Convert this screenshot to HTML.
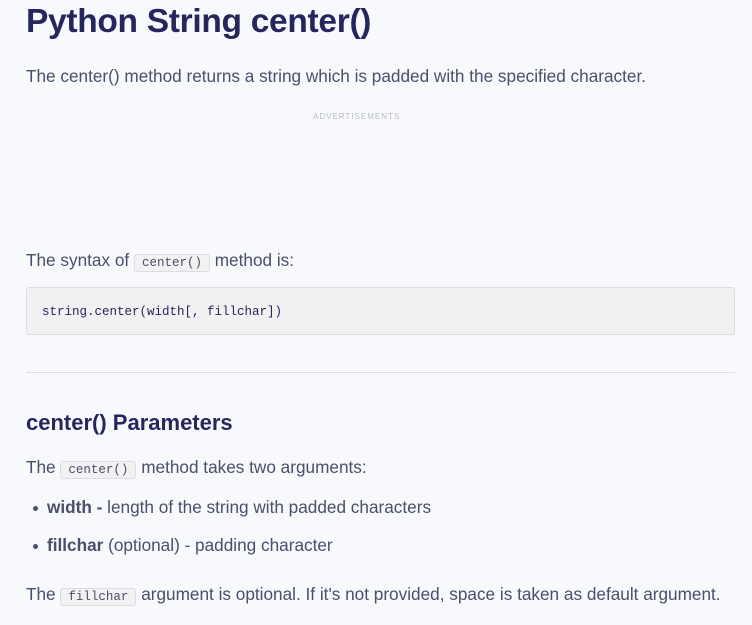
<!DOCTYPE html>
<html><head><style>
body{margin:0;width:752px;height:625px;background:#f8f9fc;font-family:"Liberation Sans",sans-serif;color:#4c4e6a;overflow:hidden;position:relative}
.a{position:absolute;left:26px;white-space:nowrap}
h1{position:absolute;left:26px;top:0;margin:0;font-size:33.5px;line-height:44px;color:#25265e;font-weight:bold;letter-spacing:-0.3px}
h2{position:absolute;left:26px;top:410px;margin:0;font-size:22px;color:#25265e;font-weight:bold}
p{margin:0;font-size:17.2px}
code{font-family:"Liberation Mono",monospace;font-size:12.5px;background:#f2f2f3;border:1px solid #dcdde3;border-radius:3px;padding:1px 7px;color:#4c4e6a}
.pre{position:absolute;left:26px;top:287px;width:709px;height:48px;background:#f1f1f2;border:1px solid #dcdde3;border-radius:3px;font-family:"Liberation Mono",monospace;font-size:12.5px;color:#25265e;line-height:48px;padding-left:15px;box-sizing:border-box}
b{color:#4c4e6a}
.dot{position:absolute;left:33px;width:5px;height:5px;border-radius:50%;background:#4c4e6a}
</style></head><body>
<h1>Python String center()</h1>
<p class="a" style="top:66px">The center() method returns a string which is padded with the specified character.</p>
<div class="a" style="left:313px;top:112px;font-size:8px;letter-spacing:1px;color:#b8bac6">ADVERTISEMENTS</div>
<p class="a" style="top:250px">The syntax of <code>center()</code> method is:</p>
<div class="pre">string.center(width[, fillchar])</div>
<div style="position:absolute;left:26px;top:372px;width:709px;height:1px;background:#dcdde3"></div>
<h2>center() Parameters</h2>
<p class="a" style="top:457px">The <code>center()</code> method takes two arguments:</p>
<div class="dot" style="top:506px"></div>
<p class="a" style="left:47px;top:497px"><b>width -</b> length of the string with padded characters</p>
<div class="dot" style="top:544px"></div>
<p class="a" style="left:47px;top:535px"><b>fillchar</b> (optional) - padding character</p>
<p class="a" style="top:584px">The <code>fillchar</code> argument is optional. If it's not provided, space is taken as default argument.</p>
</body></html>
